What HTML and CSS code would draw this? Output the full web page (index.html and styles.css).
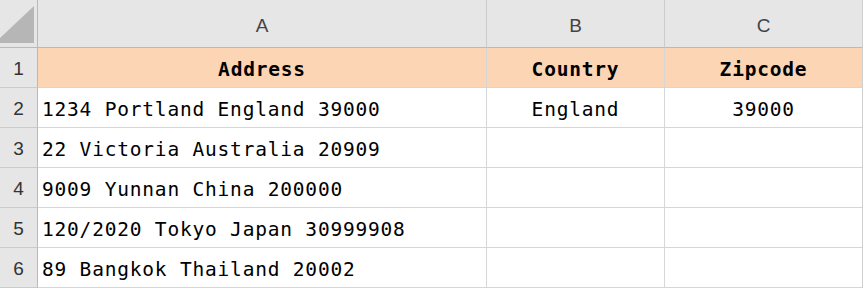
FILE: index.html
```html
<!DOCTYPE html>
<html>
<head>
<meta charset="utf-8">
<link rel="stylesheet" href="styles.css">
</head>
<body>
<div class="sheet">
  <div class="corner"><svg class="tri" width="37" height="47" viewBox="0 0 37 47"><polygon points="34,6 34,43 0,43 0,38" fill="#b6b6b6"/></svg></div>
  <div class="colhead">A</div>
  <div class="colhead">B</div>
  <div class="colhead last">C</div>

  <div class="rowhead">1</div>
  <div class="cell title center">Address</div>
  <div class="cell title center">Country</div>
  <div class="cell title center last">Zipcode</div>

  <div class="rowhead">2</div>
  <div class="cell">1234 Portland England 39000</div>
  <div class="cell center">England</div>
  <div class="cell center last">39000</div>

  <div class="rowhead">3</div>
  <div class="cell">22 Victoria Australia 20909</div>
  <div class="cell"></div>
  <div class="cell last"></div>

  <div class="rowhead">4</div>
  <div class="cell">9009 Yunnan China 200000</div>
  <div class="cell"></div>
  <div class="cell last"></div>

  <div class="rowhead">5</div>
  <div class="cell">120/2020 Tokyo Japan 30999908</div>
  <div class="cell"></div>
  <div class="cell last"></div>

  <div class="rowhead">6</div>
  <div class="cell">89 Bangkok Thailand 20002</div>
  <div class="cell"></div>
  <div class="cell last"></div>
</div>
</body>
</html>
```
FILE: styles.css
```css
html, body {
  margin: 0;
  padding: 0;
  background: #ffffff;
}
.sheet {
  display: grid;
  grid-template-columns: 38px 449px 178px 198px;
  grid-template-rows: 48px repeat(6, 40px);
  width: 863px;
}
.sheet > div {
  box-sizing: border-box;
}
.corner {
  background: #e6e6e6;
  border-right: 1px solid #b9b9b9;
  border-bottom: 1px solid #b9b9b9;
  position: relative;
  overflow: hidden;
}
.tri {
  display: block;
}
.colhead {
  background: #e6e6e6;
  border-right: 1px solid #cbcbcb;
  border-bottom: 1px solid #b9b9b9;
  display: flex;
  align-items: center;
  justify-content: center;
  font-family: "Liberation Sans", Arial, sans-serif;
  font-size: 19px;
  color: #444444;
  padding-top: 4px;
}
.rowhead {
  background: #e6e6e6;
  border-right: 1px solid #b9b9b9;
  border-bottom: 1px solid #cbcbcb;
  display: flex;
  align-items: center;
  justify-content: center;
  font-family: "Liberation Sans", Arial, sans-serif;
  font-size: 19px;
  color: #333333;
  padding-top: 2px;
}
.cell {
  border-right: 1px solid #d6d6d6;
  border-bottom: 1px solid #d6d6d6;
  display: flex;
  align-items: center;
  padding-left: 4px;
  padding-top: 3px;
  font-family: "DejaVu Sans Mono", monospace;
  font-size: 19.5px;
  letter-spacing: 0.8px;
  color: #000000;
  white-space: nowrap;
}
.cell.center {
  justify-content: center;
  padding-left: 0;
}
.cell.title {
  background: #fcd5b4;
  font-weight: bold;
  color: #000000;
}
.last {
  border-right-color: #cfcfcf;
}
```
